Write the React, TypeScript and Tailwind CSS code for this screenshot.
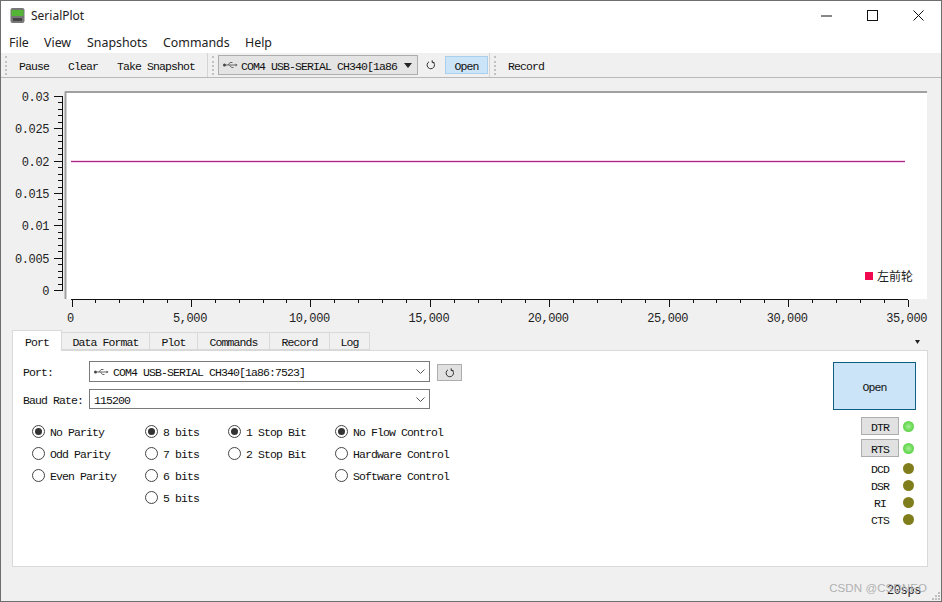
import React from 'react';

const mono = "font-['Liberation_Mono','Noto_Sans_CJK_SC',monospace] text-[11.5px] tracking-[-0.9px] text-[#111]";
const plotText = "font-['Liberation_Mono',monospace] text-[12px] tracking-[-0.4px] fill-[#222]";
// the reference font sits lower in its line than Liberation Mono does
const lift = 'pt-[3px]';

const UsbIcon = () => (
  <svg width="15" height="8" viewBox="0 0 15 8" className="shrink-0" fill="none" stroke="#666" strokeWidth="1">
    <circle cx="1.5" cy="4" r="1.5" fill="#444" stroke="none" />
    <path d="M3 4h11M5 4l2-2.5h2.5M6.5 4l2 2.5h2" />
    <path d="M14.5 4l-2-1.5v3z" fill="#666" stroke="none" />
  </svg>
);

const RefreshIcon = () => (
  <svg width="10" height="10" viewBox="0 0 10 10" fill="none" stroke="#333" strokeWidth="1">
    <path d="M3 1.8a3.7 3.7 0 1 0 3.6 0" />
    <path d="M6.2 0.3v2.2h2.2" />
  </svg>
);

const Chevron = () => (
  <svg width="9" height="5" viewBox="0 0 9 5" fill="none" stroke="#555" strokeWidth="1" className="shrink-0">
    <path d="M0.5 0.5l4 4 4-4" />
  </svg>
);

const Handle = () => <div className="h-[19px] w-[2px] border-l-2 border-dotted border-[#c2c2c2]" />;

const Radio = ({ label, checked }: { label: string; checked?: boolean }) => (
  <div className={`flex h-[22px] items-center gap-[5px] ${mono}`}>
    <div className="flex h-[13px] w-[13px] items-center justify-center rounded-full border border-[#444] bg-white">
      {checked && <div className="h-[7px] w-[7px] rounded-full bg-[#333]" />}
    </div>
    <span className={lift}>{label}</span>
  </div>
);

const Led = ({ on }: { on?: boolean }) => (
  <div
    className={
      on
        ? 'h-[11px] w-[11px] rounded-full bg-[radial-gradient(circle,#a5ee95_0%,#6ada55_55%,#55c444_100%)]'
        : 'h-[11px] w-[11px] rounded-full bg-[#807e1c]'
    }
  />
);

const SignalButton = ({ label }: { label: string }) => (
  <div className="flex h-[18px] items-center justify-end gap-[4px] pr-[2px]">
    <div className={`flex h-[18px] w-[38px] items-center justify-center border border-[#adadad] bg-[#e1e1e1] ${lift} ${mono}`}>
      {label}
    </div>
    <Led on />
  </div>
);

const SignalRow = ({ label }: { label: string }) => (
  <div className="flex h-[17px] items-center justify-end gap-[4px] pr-[2px]">
    <div className={`w-[38px] text-center ${lift} ${mono}`}>{label}</div>
    <Led />
  </div>
);

const Plot = () => {
  const xMajor = [0, 5, 10, 15, 20, 25, 30, 35];
  const xLabels = ['0', '5,000', '10,000', '15,000', '20,000', '25,000', '30,000', '35,000'];
  const yLabels = ['0', '0.005', '0.01', '0.015', '0.02', '0.025', '0.03'];
  const xTicks = Array.from({ length: 36 }, (_, i) => i);
  const yTicks = Array.from({ length: 31 }, (_, i) => i);
  const px = (k: number) => 71.5 + k * 23.886;
  const py = (k: number) => Math.round(290 - k * 6.467) + 0.5;
  return (
    <svg width="940" height="252" viewBox="1 78 940 252" className="block shrink-0">
      <rect x="65" y="91" width="862" height="208" fill="#fff" />
      <path d="M65.5 299V91.5" stroke="#a0a0a0" strokeWidth="2" />
      <path d="M65 92h862" stroke="#a0a0a0" strokeWidth="2" />
      {/* the data line has a pale halo in the reference */}
      <rect x="71" y="160" width="834" height="3" fill="#f6d4ee" />
      <rect x="71" y="161" width="834" height="1" fill="#a82880" />
      {/* y axis */}
      <path d="M62.5 96V291" stroke="#111" />
      {yTicks.map(k => (
        <path key={k} d={`M${k % 5 === 0 ? 54 : 58} ${py(k)}H63`} stroke="#111" />
      ))}
      {yLabels.map((l, i) => (
        <text key={l} x="49" y={py(i * 5) + 4.5} textAnchor="end" className={plotText}>
          {l}
        </text>
      ))}
      {/* x axis */}
      <path d="M71 299.5H908" stroke="#111" />
      {xTicks.map(k => (
        <path key={k} d={`M${Math.round(px(k)) + 0.5} 300V${k % 5 === 0 ? 307 : 303}`} stroke="#111" />
      ))}
      {xMajor.map((k, i) => (
        <text
          key={k}
          x={i === 7 ? 927 : px(k) - 1}
          y="322"
          textAnchor={i === 7 ? 'end' : 'middle'}
          className={plotText}
        >
          {xLabels[i]}
        </text>
      ))}
      {/* legend */}
      <rect x="865" y="272" width="8" height="8" fill="#f0094f" />
      <text x="877" y="281" className="font-['Noto_Sans_CJK_SC',sans-serif] text-[12px] fill-[#222]">
        左前轮
      </text>
    </svg>
  );
};

const tabs = [
  { label: 'Data Format', w: 'w-[88px]' },
  { label: 'Plot', w: 'w-[48px]' },
  { label: 'Commands', w: 'w-[72px]' },
  { label: 'Record', w: 'w-[60px]' },
  { label: 'Log', w: 'w-[40px]' },
];

export default function App() {
  return (
    <div className="relative flex h-[602px] w-[942px] flex-col overflow-hidden border border-[#6e6e6e] bg-[#f0f0f0]">
      {/* title bar */}
      <div className="flex h-[29px] shrink-0 items-center bg-white pl-[9px] font-['Noto_Sans',sans-serif] text-[12px] text-[#222]">
        <svg width="15" height="15" viewBox="0 0 15 15" className="shrink-0">
          <rect x="0.5" y="0" width="14" height="15" rx="2" fill="#777" />
          <rect x="1.5" y="2" width="12" height="6" fill="#54b436" />
          <rect x="3" y="10" width="9" height="3" fill="#444" />
        </svg>
        <span className="ml-[6px]">SerialPlot</span>
        <div className="ml-auto flex items-center pr-[17px]">
          <svg width="11" height="2" viewBox="0 0 11 2">
            <path d="M0 1h11" stroke="#111" />
          </svg>
          <svg width="11" height="11" viewBox="0 0 11 11" className="ml-[35px]" fill="none">
            <rect x="0.5" y="0.5" width="10" height="10" stroke="#111" />
          </svg>
          <svg width="11" height="11" viewBox="0 0 11 11" className="ml-[35px]" fill="none">
            <path d="M0.5 0.5l10 10M10.5 0.5l-10 10" stroke="#111" />
          </svg>
        </div>
      </div>

      {/* menu bar */}
      <div className="flex h-[23px] shrink-0 items-center bg-white pt-[4px] font-['Noto_Sans',sans-serif] text-[12.4px] text-[#222]">
        <span className="ml-[8px] w-[35px]">File</span>
        <span className="w-[43px]">View</span>
        <span className="w-[76px]">Snapshots</span>
        <span className="w-[82px]">Commands</span>
        <span>Help</span>
      </div>

      {/* toolbar */}
      <div className={`flex h-[25px] shrink-0 items-center border-b border-[#b9b9b9] pl-[4px] ${mono}`}>
        <Handle />
        <span className={`ml-[12px] w-[30px] ${lift}`}>Pause</span>
        <span className={`ml-[19px] w-[30px] ${lift}`}>Clear</span>
        <span className={`ml-[19px] w-[78px] ${lift}`}>Take Snapshot</span>
        <div className="ml-[12px] h-[24px] w-px bg-[#d4d4d4]" />
        <div className="ml-[4px]">
          <Handle />
        </div>
        <div className="ml-[4px] flex h-[20px] w-[200px] items-center gap-[3px] border border-[#adadad] bg-[#e4e4e4] pl-[4px]">
          <UsbIcon />
          <span className={`whitespace-nowrap ${lift}`}>COM4 USB-SERIAL CH340[1a86</span>
          <svg width="8" height="5" viewBox="0 0 8 5" className="ml-[4px] shrink-0">
            <path d="M0 0h8L4 5z" fill="#222" />
          </svg>
        </div>
        <div className="ml-[8px]">
          <RefreshIcon />
        </div>
        <div className="ml-[9px] flex h-[18px] w-[43px] items-center justify-center border border-[#a9cfec] bg-[#cce4f7] pt-[4px]">
          Open
        </div>
        <div className="ml-[1px] h-[24px] w-px bg-[#d4d4d4]" />
        <div className="ml-[4px]">
          <Handle />
        </div>
        <span className={`ml-[12px] ${lift}`}>Record</span>
      </div>

      <Plot />

      {/* tabs */}
      <div className={`flex h-[20px] shrink-0 items-end pl-[11px] pr-[8px] ${mono}`}>
        <div className={`relative z-10 -mb-px flex h-[21px] w-[50px] items-center justify-center border border-b-0 border-[#d9d9d9] bg-white ${lift}`}>
          Port
        </div>
        {tabs.map(t => (
          <div
            key={t.label}
            className={`flex h-[18px] items-center justify-center border border-l-0 border-[#d9d9d9] ${lift} ${t.w}`}
          >
            {t.label}
          </div>
        ))}
        <svg width="5" height="4" viewBox="0 0 5 4" className="mb-[6px] ml-auto mr-[13px]">
          <path d="M0 0h5L2.5 4z" fill="#222" />
        </svg>
      </div>

      {/* tab pane */}
      <div className={`ml-[11px] flex h-[217px] w-[916px] shrink-0 justify-between border border-[#d9d9d9] bg-white pl-[10px] pr-[11px] pt-[10px] ${mono}`}>
        <div className="flex flex-col">
          <div className="flex h-[21px] items-start">
            <span className={`w-[66px] ${lift}`}>Port:</span>
            <div className="flex h-[21px] w-[341px] items-center gap-[4px] border border-[#7a7a7a] pl-[4px] pr-[4px]">
              <UsbIcon />
              <span className={lift}>COM4 USB-SERIAL CH340[1a86:7523]</span>
              <div className="ml-auto">
                <Chevron />
              </div>
            </div>
            <div className="ml-[7px] mt-[3px] flex h-[17px] w-[25px] items-center justify-center border border-[#adadad] bg-[#e1e1e1]">
              <RefreshIcon />
            </div>
          </div>
          <div className="mt-[7px] flex h-[20px] items-center">
            <span className={`w-[66px] ${lift}`}>Baud Rate:</span>
            <div className="flex h-[20px] w-[341px] items-center border border-[#7a7a7a] pl-[4px] pr-[4px]">
              <span className={lift}>115200</span>
              <div className="ml-auto">
                <Chevron />
              </div>
            </div>
          </div>
          <div className="ml-[9px] mt-[11px] flex">
            <div className="w-[113px]">
              <Radio label="No Parity" checked />
              <Radio label="Odd Parity" />
              <Radio label="Even Parity" />
            </div>
            <div className="w-[83px]">
              <Radio label="8 bits" checked />
              <Radio label="7 bits" />
              <Radio label="6 bits" />
              <Radio label="5 bits" />
            </div>
            <div className="w-[107px]">
              <Radio label="1 Stop Bit" checked />
              <Radio label="2 Stop Bit" />
            </div>
            <div>
              <Radio label="No Flow Control" checked />
              <Radio label="Hardware Control" />
              <Radio label="Software Control" />
            </div>
          </div>
        </div>

        <div className="flex w-[83px] flex-col pt-px">
          <div className={`flex h-[48px] items-center justify-center border border-[#0f5f85] bg-[#cce4f7] ${lift}`}>Open</div>
          <div className="mt-[7px] flex flex-col gap-[4px]">
            <SignalButton label="DTR" />
            <SignalButton label="RTS" />
          </div>
          <div className="mt-[3px]">
            <SignalRow label="DCD" />
            <SignalRow label="DSR" />
            <SignalRow label="RI" />
            <SignalRow label="CTS" />
          </div>
        </div>
      </div>

      {/* status bar */}
      <div className="flex flex-1 items-end justify-end pb-px pr-[20px]">
        <span className="font-['Liberation_Mono',monospace] text-[12px] tracking-[-0.4px] text-[#222]">20sps</span>
      </div>
      <svg width="9" height="9" viewBox="0 0 9 9" className="absolute bottom-0 right-0">
        <g fill="#bdbdbd">
          <rect x="6" y="0" width="2" height="2" />
          <rect x="3" y="3" width="2" height="2" />
          <rect x="6" y="3" width="2" height="2" />
          <rect x="0" y="6" width="2" height="2" />
          <rect x="3" y="6" width="2" height="2" />
          <rect x="6" y="6" width="2" height="2" />
        </g>
      </svg>
      {/* watermark */}
      <span className="absolute bottom-[4px] right-[14px] font-['Liberation_Sans',sans-serif] text-[11.5px] tracking-[0.1px] text-[#b0b0b0]">
        CSDN @CSDNEO
      </span>
    </div>
  );
}
